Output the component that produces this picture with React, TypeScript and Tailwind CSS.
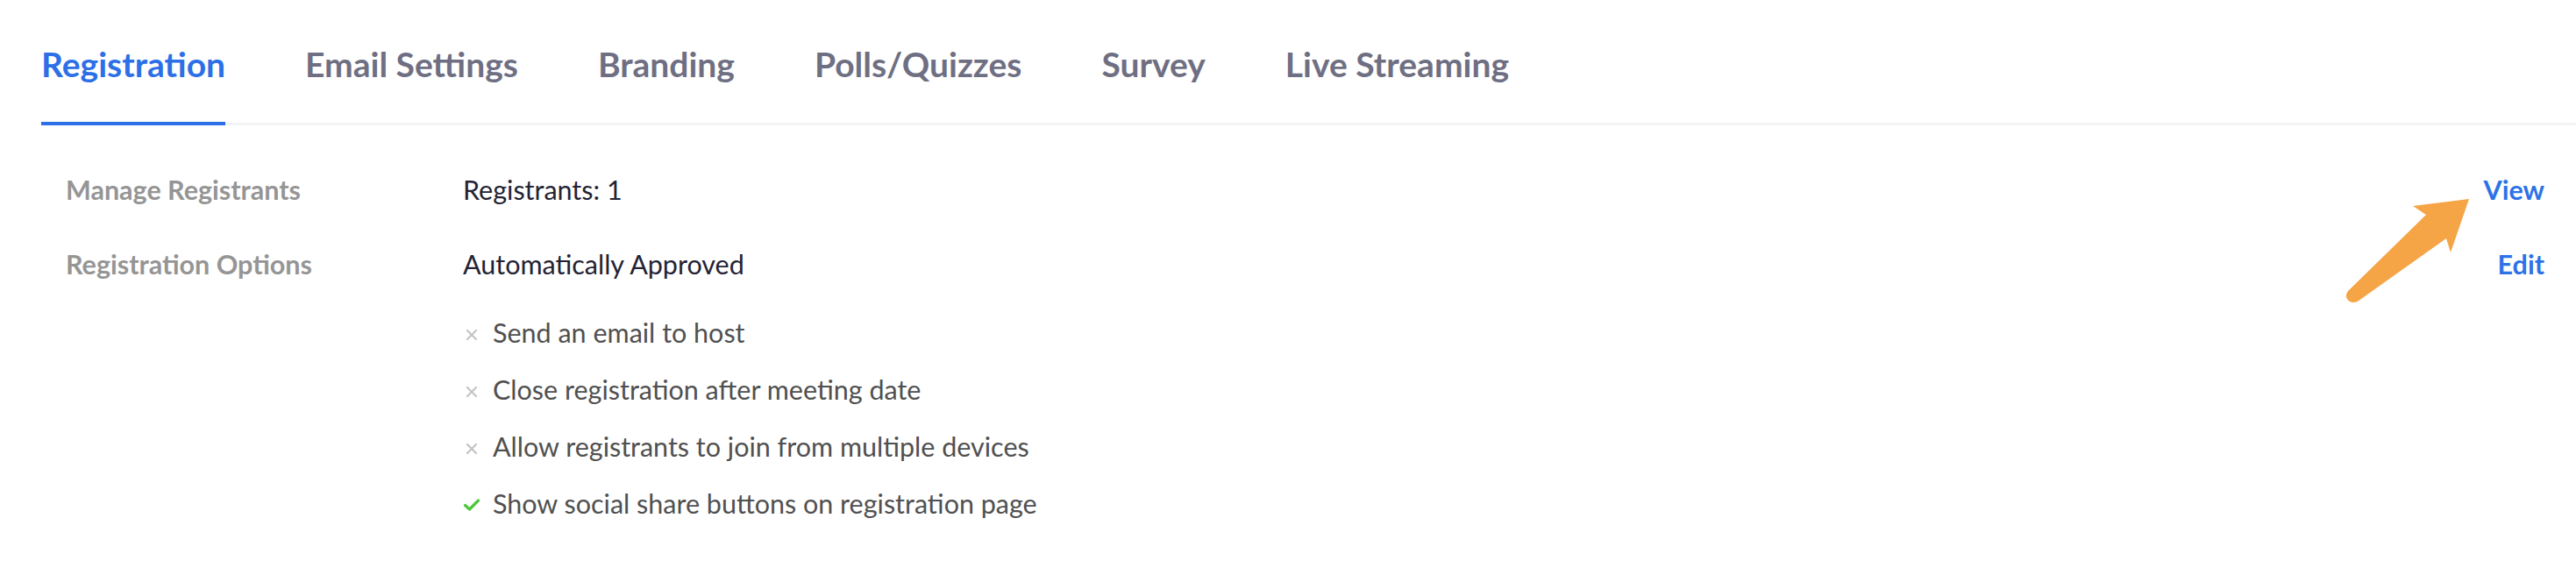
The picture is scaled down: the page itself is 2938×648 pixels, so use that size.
import React from 'react'

const tabs = ['Registration', 'Email Settings', 'Branding', 'Polls/Quizzes', 'Survey', 'Live Streaming']

const options = [
  { label: 'Send an email to host', on: false },
  { label: 'Close registration after meeting date', on: false },
  { label: 'Allow registrants to join from multiple devices', on: false },
  { label: 'Show social share buttons on registration page', on: true },
]

function Cross() {
  return (
    <svg width="16" height="16" viewBox="0 0 16 16" className="shrink-0">
      <path d="M3 4 L13 14 M13 4 L3 14" stroke="#c4c4c4" strokeWidth="2.2" strokeLinecap="round" />
    </svg>
  )
}

function Check() {
  return (
    <svg width="20" height="16" viewBox="0 0 20 16" className="shrink-0">
      <path d="M2.5 8.5 L7.5 13 L17.5 3" fill="none" stroke="#4cc63a" strokeWidth="3.2" strokeLinecap="round" strokeLinejoin="round" />
    </svg>
  )
}

export default function App() {
  return (
    <div className="relative h-[648px] w-full overflow-hidden bg-white font-['Lato','Open_Sans',sans-serif]">
      {/* tabs */}
      <div className="ml-[47px] flex gap-[91px] border-b-[3px] border-[#f3f3f5]">
        {tabs.map((t, i) => (
          <div
            key={t}
            className={`-mb-[3px] pt-[54px] pb-[46px] text-[39px] leading-[39px] font-bold ${
              i === 0 ? 'border-b-4 border-[#2d6fe6] text-[#2d6fe6]' : 'border-b-4 border-transparent text-[#6f6f83]'
            }`}
          >
            {t}
          </div>
        ))}
      </div>

      {/* settings */}
      <div className="flex flex-col pl-[75px] pr-[36px] pt-[58px] text-[30.5px] leading-[30px]">
        <div className="flex">
          <div className="w-[453px] font-bold text-[#959595]">Manage Registrants</div>
          <div className="flex-1 text-[#232333]">Registrants: 1</div>
          <a className="font-bold text-[#2d72e6]">View</a>
        </div>

        <div className="mt-[55px] flex">
          <div className="w-[453px] font-bold text-[#959595]">Registration Options</div>
          <div className="flex-1">
            <div className="text-[#232333]">Automatically Approved</div>
            <ul className="mt-[48px] flex flex-col gap-[35px]">
              {options.map((o) => (
                <li key={o.label} className="flex items-center gap-[14px] text-[#505050]">
                  <span className="flex w-[20px] justify-center pt-[4px]">{o.on ? <Check /> : <Cross />}</span>
                  {o.label}
                </li>
              ))}
            </ul>
          </div>
          <a className="font-bold text-[#2d72e6]">Edit</a>
        </div>
      </div>

      {/* annotation arrow */}
      <svg className="absolute left-[2660px] top-[215px]" width="170" height="140" viewBox="0 0 170 140">
        <path
          d="M156 12 L92 20 L107 30 L18 117 Q13 124 20 129 Q26 132 33 126 L130 57 L135 73 Z"
          fill="#f5a446"
        />
      </svg>
    </div>
  )
}
